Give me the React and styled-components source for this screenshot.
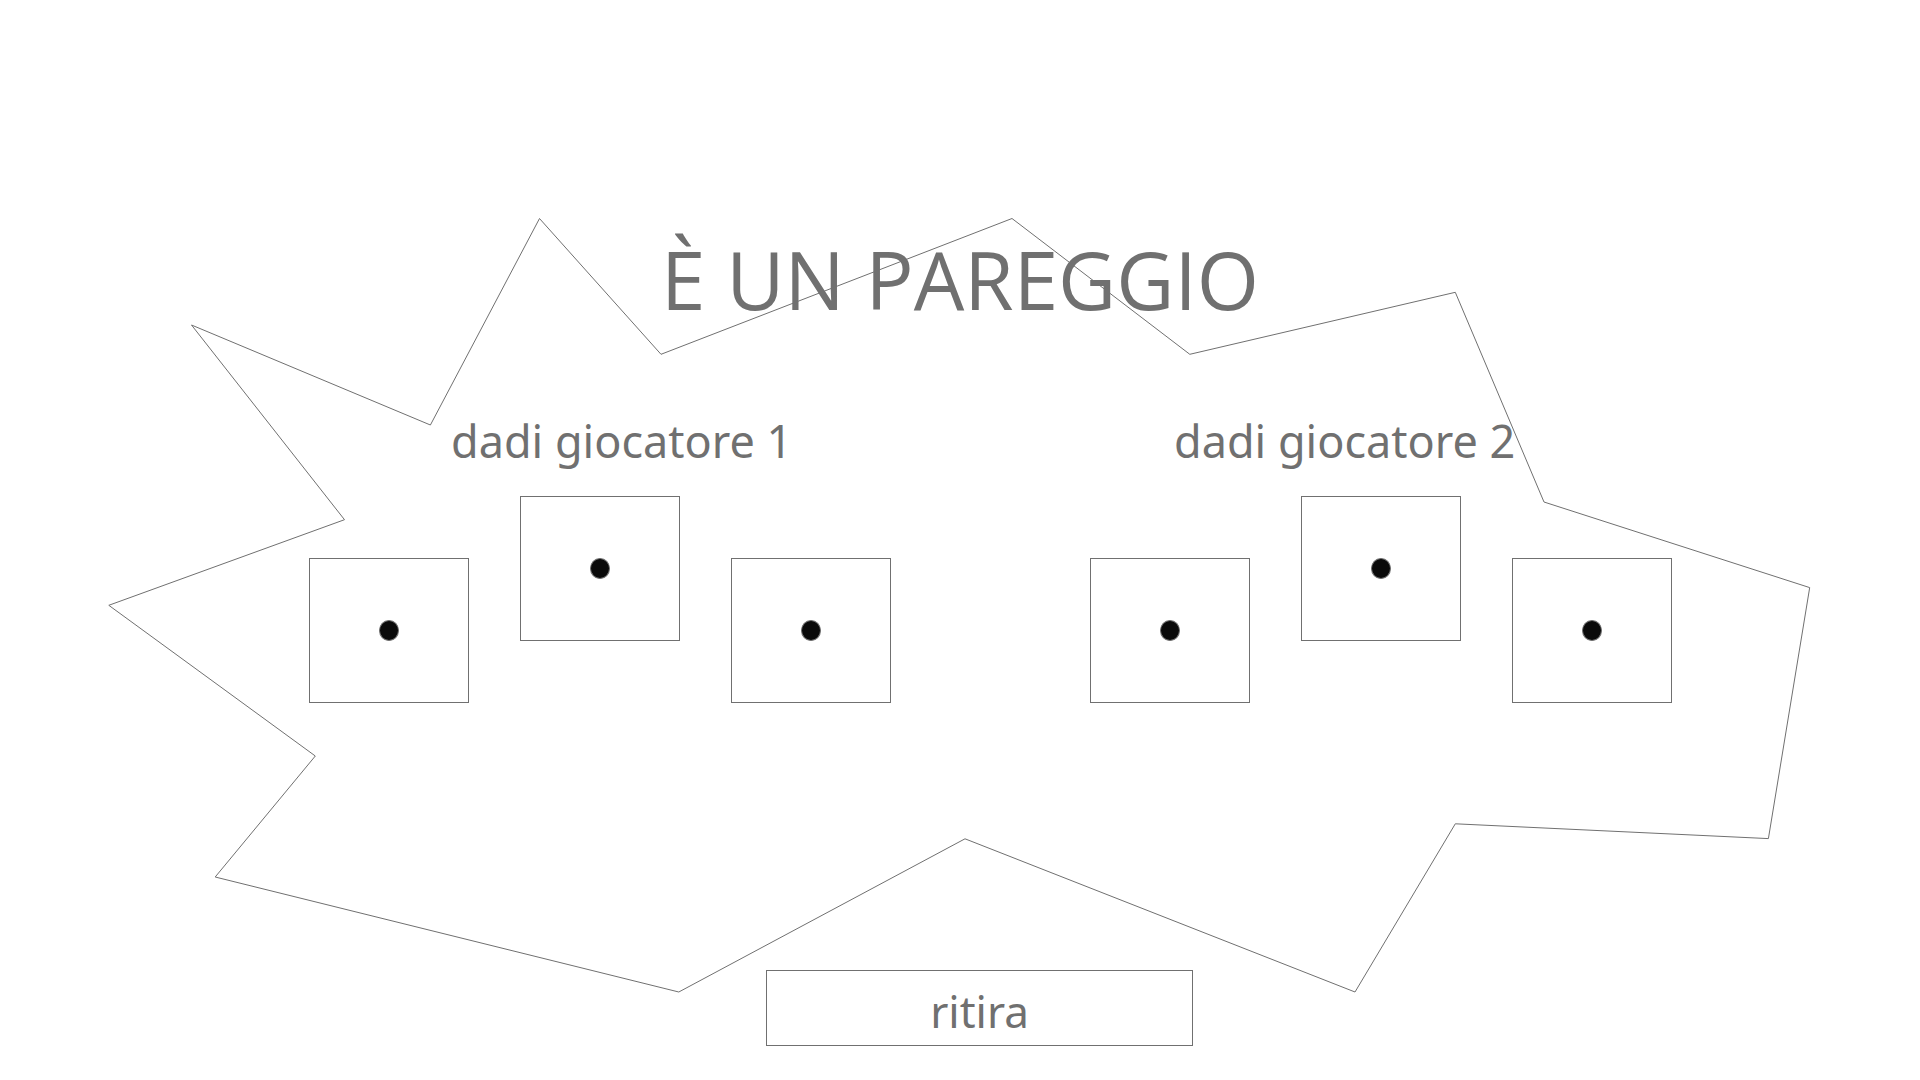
import React from "react";
import styled, { createGlobalStyle } from "styled-components";

const GlobalStyle = createGlobalStyle`
  *, *::before, *::after { box-sizing: border-box; }
  body {
    margin: 0;
    background: #ffffff;
    color: #707070;
    font-family: "Noto Sans", "Open Sans", sans-serif;
  }
`;

const Page = styled.main`
  position: relative;
  isolation: isolate;
  display: flex;
  flex-direction: column;
  align-items: center;
  min-height: 100vh;
  padding: 225px 0 34px;
`;

const Burst = styled.svg`
  position: absolute;
  top: 0;
  left: 0;
  z-index: -1;
  width: 100%;
  height: auto;
  fill: none;
  stroke: #707070;
  stroke-width: 1;
`;

const Title = styled.h1`
  margin: 0 0 78px;
  font-family: "Open Sans", "Noto Sans", sans-serif;
  font-size: 80px;
  font-weight: 400;
  line-height: 108px;
`;

const Players = styled.div`
  display: flex;
  justify-content: center;
  gap: 199px;
  padding-left: 61px;
`;

const Player = styled.section`
  display: flex;
  flex-direction: column;
  gap: 25px;
`;

const PlayerName = styled.h2`
  margin: 0;
  padding-left: ${({ $indent }) => $indent}px;
  font-size: 45px;
  font-weight: 400;
  line-height: 60px;
  white-space: nowrap;
`;

const DiceRow = styled.div`
  display: flex;
  align-items: flex-start;
  gap: 51px;
`;

const Die = styled.div`
  display: flex;
  align-items: center;
  justify-content: center;
  width: 160px;
  height: 145px;
  margin-top: ${({ $raised }) => ($raised ? 0 : 62)}px;
  border: 1px solid #707070;
`;

const Pip = styled.span`
  width: 20px;
  height: 21px;
  border: 1px solid #707070;
  border-radius: 50%;
  background: #0a0a0a;
`;

const Actions = styled.div`
  margin-top: 267px;
  padding-left: 39px;
`;

const RollButton = styled.button`
  width: 427px;
  height: 76px;
  padding: 6px 0 0;
  border: 1px solid #707070;
  background: #ffffff;
  color: inherit;
  font-family: inherit;
  font-size: 44px;
  line-height: 60px;
  cursor: pointer;
`;

const players = [
  { name: "dadi giocatore 1", indent: 142 },
  { name: "dadi giocatore 2", indent: 84 },
];

const dice = [{ raised: false }, { raised: true }, { raised: false }];

export default function App() {
  return (
    <>
      <GlobalStyle />
      <Page>
        <Burst viewBox="0 0 1920 1080" aria-hidden="true">
          <polygon points="539.5,218.5 661,354.3 1012,218.5 1189.8,354.3 1455.3,292.3 1544,502 1809.7,587.6 1768.4,838.6 1455.3,823.8 1355,992 965,838.8 678.8,992 215.2,877 315.3,756 108.8,605.3 344.5,519.7 191.5,325 430.4,425" />
        </Burst>
        <Title>È UN PAREGGIO</Title>
        <Players>
          {players.map((player) => (
            <Player key={player.name}>
              <PlayerName $indent={player.indent}>{player.name}</PlayerName>
              <DiceRow>
                {dice.map((die, i) => (
                  <Die key={i} $raised={die.raised}>
                    <Pip />
                  </Die>
                ))}
              </DiceRow>
            </Player>
          ))}
        </Players>
        <Actions>
          <RollButton type="button">ritira</RollButton>
        </Actions>
      </Page>
    </>
  );
}
